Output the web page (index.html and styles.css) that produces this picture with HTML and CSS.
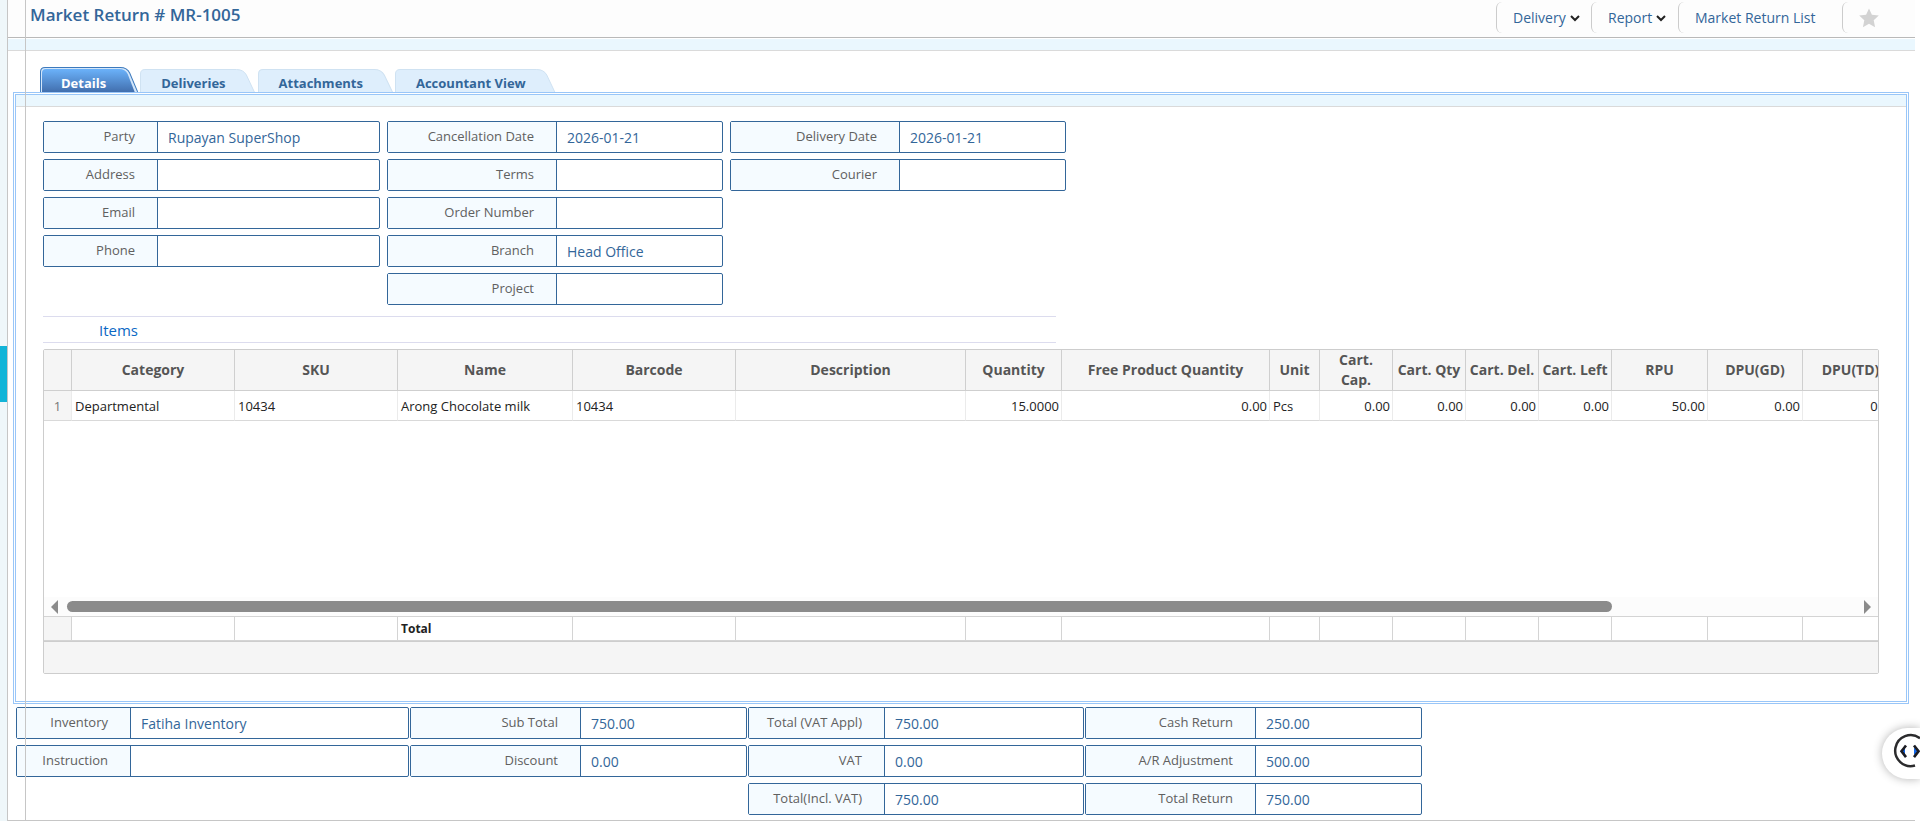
FILE: index.html
```html
<!DOCTYPE html>
<html lang="en">
<head>
<meta charset="utf-8">
<title>Market Return # MR-1005</title>
<link rel="stylesheet" href="styles.css">
</head>
<body>
<div class="app">
  <aside class="strip"><button class="strip-handle" aria-label="Open menu"></button></aside>
  <main class="main">
    <header class="header">
      <h1 class="title">Market Return # MR-1005</h1>
      <nav class="actions">
        <button class="action">Delivery
          <svg class="chevron" viewBox="0 0 10 8"><path d="M1 2l4 4 4-4"/></svg>
        </button>
        <button class="action">Report
          <svg class="chevron" viewBox="0 0 10 8"><path d="M1 2l4 4 4-4"/></svg>
        </button>
        <a class="action" href="#list">Market Return List</a>
        <button class="action" aria-label="Add to favourites">
          <svg class="star" viewBox="0 0 20 20"><path d="M10 0.500l2.900 6.300 6.900.8-5.100 4.700 1.400 6.900L10 15.800l-6.100 3.400 1.400-6.900L.2 7.600l6.900-.8z"/></svg>
        </button>
      </nav>
    </header>
    <div class="band"></div>

    <div class="tabs" role="tablist">
      <button class="tab tab-active" role="tab" aria-selected="true">
        <svg class="tab-shape" viewBox="0 0 98 25" preserveAspectRatio="none">
          <defs><linearGradient id="blue" x1="0" y1="0" x2="0" y2="1"><stop offset="0" stop-color="#6bb2fa"/><stop offset="1" stop-color="#426fae"/></linearGradient></defs>
          <path fill="#d3e6fa" stroke="#3d7abd" d="M.5 25V5Q.5.5 5 .5H80Q87 .5 89.500 6L97.500 25"/>
          <path fill="url(#blue)" d="M2 25V6Q2 2 6 2H79Q85 2 87.500 7L94.500 25z"/>
        </svg>
        <span class="tab-text">Details</span>
      </button>
      <button class="tab" role="tab">
        <svg class="tab-shape" viewBox="0 0 116 23" preserveAspectRatio="none"><path fill="#deeefc" stroke="#cfe2f2" d="M.5 24V5Q.5.5 5 .5H97Q104 .5 107 6L115.500 24"/></svg>
        <span class="tab-text">Deliveries</span>
      </button>
      <button class="tab" role="tab">
        <svg class="tab-shape" viewBox="0 0 133 23" preserveAspectRatio="none"><path fill="#deeefc" stroke="#cfe2f2" d="M.5 24V5Q.5.5 5 .5H114Q121 .5 124 6L132.500 24"/></svg>
        <span class="tab-text">Attachments</span>
      </button>
      <button class="tab" role="tab">
        <svg class="tab-shape" viewBox="0 0 161 23" preserveAspectRatio="none"><path fill="#deeefc" stroke="#cfe2f2" d="M.5 24V5Q.5.5 5 .5H142Q149 .5 152 6L160.500 24"/></svg>
        <span class="tab-text">Accountant View</span>
      </button>
    </div>

    <section class="panel">
      <div class="band band-inner"></div>
      <div class="panel-body">
        <div class="details">
          <div class="group group-party">
            <div class="field"><label for="party">Party</label><input id="party" readonly value="Rupayan SuperShop"></div>
            <div class="field"><label for="address">Address</label><input id="address" readonly></div>
            <div class="field"><label for="email">Email</label><input id="email" readonly></div>
            <div class="field"><label for="phone">Phone</label><input id="phone" readonly></div>
          </div>
          <div class="group group-order">
            <div class="field"><label for="cancel">Cancellation Date</label><input id="cancel" readonly value="2026-01-21"></div>
            <div class="field"><label for="terms">Terms</label><input id="terms" readonly></div>
            <div class="field"><label for="order">Order Number</label><input id="order" readonly></div>
            <div class="field"><label for="branch">Branch</label><input id="branch" readonly value="Head Office"></div>
            <div class="field"><label for="project">Project</label><input id="project" readonly></div>
          </div>
          <div class="group group-order">
            <div class="field"><label for="delivery">Delivery Date</label><input id="delivery" readonly value="2026-01-21"></div>
            <div class="field"><label for="courier">Courier</label><input id="courier" readonly></div>
          </div>
        </div>

        <h2 class="section-title">Items</h2>

        <div class="grid">
          <div class="grid-view">
            <table class="items">
              <colgroup><col class="c28"><col class="c163"><col class="c163"><col class="c175"><col class="c163"><col class="c230"><col class="c96"><col class="c208"><col class="c50"><col class="c73"><col class="c73"><col class="c73"><col class="c73"><col class="c96"><col class="c95"><col class="c96"></colgroup>
              <thead>
                <tr><th></th><th>Category</th><th>SKU</th><th>Name</th><th>Barcode</th><th>Description</th><th>Quantity</th><th>Free Product Quantity</th><th>Unit</th><th>Cart.<br>Cap.</th><th>Cart. Qty</th><th>Cart. Del.</th><th>Cart. Left</th><th>RPU</th><th>DPU(GD)</th><th>DPU(TD)</th></tr>
              </thead>
              <tbody>
                <tr><td class="index">1</td><td>Departmental</td><td>10434</td><td>Arong Chocolate milk</td><td>10434</td><td></td><td class="num">15.0000</td><td class="num">0.00</td><td>Pcs</td><td class="num">0.00</td><td class="num">0.00</td><td class="num">0.00</td><td class="num">0.00</td><td class="num">50.00</td><td class="num">0.00</td><td class="num">0.00</td></tr>
              </tbody>
            </table>
          </div>
          <div class="scrollbar">
            <svg class="arrow" viewBox="0 0 7 14"><path d="M7 0v14L0 7z"/></svg>
            <div class="track"><div class="thumb"></div></div>
            <svg class="arrow" viewBox="0 0 7 14"><path d="M0 0v14l7-7z"/></svg>
          </div>
          <div class="grid-total">
            <table class="items totals">
              <colgroup><col class="c28"><col class="c163"><col class="c163"><col class="c175"><col class="c163"><col class="c230"><col class="c96"><col class="c208"><col class="c50"><col class="c73"><col class="c73"><col class="c73"><col class="c73"><col class="c96"><col class="c95"><col class="c96"></colgroup>
              <tbody><tr><td class="index"></td><td></td><td></td><td>Total</td><td></td><td></td><td></td><td></td><td></td><td></td><td></td><td></td><td></td><td></td><td></td><td></td></tr></tbody>
            </table>
          </div>
          <div class="grid-foot"></div>
        </div>
      </div>
    </section>

    <footer class="summary">
      <div class="group group-inventory">
        <div class="field"><label for="inventory">Inventory</label><input id="inventory" readonly value="Fatiha Inventory"></div>
        <div class="field"><label for="instruction">Instruction</label><input id="instruction" readonly></div>
      </div>
      <div class="group group-amount">
        <div class="field"><label for="subtotal">Sub Total</label><input id="subtotal" readonly value="750.00"></div>
        <div class="field"><label for="discount">Discount</label><input id="discount" readonly value="0.00"></div>
      </div>
      <div class="group group-vat">
        <div class="field"><label for="appl">Total (VAT Appl)</label><input id="appl" readonly value="750.00"></div>
        <div class="field"><label for="vat">VAT</label><input id="vat" readonly value="0.00"></div>
        <div class="field"><label for="incl">Total(Incl. VAT)</label><input id="incl" readonly value="750.00"></div>
      </div>
      <div class="group group-amount">
        <div class="field"><label for="cash">Cash Return</label><input id="cash" readonly value="250.00"></div>
        <div class="field"><label for="ar">A/R Adjustment</label><input id="ar" readonly value="500.00"></div>
        <div class="field"><label for="total">Total Return</label><input id="total" readonly value="750.00"></div>
      </div>
    </footer>
  </main>
</div>

<button class="widget" aria-label="Code widget">
  <svg viewBox="0 0 38 51">
    <path fill="none" stroke="#2b2b2d" stroke-width="2.500" d="M38 10.200A15.500 15.500 0 1 0 33 37.500"/>
    <path fill="#1467e8" d="M23 19.500v7.500l-4-3.700zM32 19.500v7.500l4-3.700z"/>
    <path fill="none" stroke="#1c1c22" stroke-width="2.600" d="M24 17.500l-4.500 5.800 4.500 5.800M32 17.500l4.500 5.800-4.500 5.800"/>
  </svg>
</button>
</body>
</html>
```
FILE: styles.css
```css
* { box-sizing: border-box; }

body {
  margin: 0;
  background: #fff;
  color: #222;
  font-family: "Open Sans", "Noto Sans", sans-serif;
  font-size: 14px;
  overflow-x: hidden;
}

button, input { font: inherit; }
button { border: 0; padding: 0; background: none; cursor: pointer; }

.app { display: flex; min-height: 100vh; }

.strip {
  flex: 0 0 7px;
  display: flex;
  flex-direction: column;
  padding-top: 346px;
  background: #eff7fa;
}
.strip-handle { height: 56px; background: #12b4d8; }

.main {
  position: relative;
  flex: 1;
  min-width: 0;
  display: flex;
  flex-direction: column;
  margin-right: 5px;
  border-left: 1px solid #c6c6c6;
  border-bottom: 1px solid #c6c6c6;
}
.main::after {
  content: "";
  position: absolute;
  top: 0;
  bottom: 0;
  left: 17px;
  width: 1px;
  background: #c6c6c6;
  pointer-events: none;
}

.header {
  display: flex;
  justify-content: space-between;
  height: 38px;
  padding-left: 22px;
  background: #fdfdfd;
  border-bottom: 1px solid #b9b9b9;
}
.title {
  margin: 0;
  color: #336699;
  font-size: 17px;
  font-weight: 600;
  line-height: 30px;
}
.actions {
  display: grid;
  grid-template-columns: 95px 87px 164px 73px;
  padding: 2px 0 4px;
}
.action {
  display: flex;
  align-items: center;
  gap: 4px;
  padding-left: 16px;
  border-left: 1px solid #ccc;
  border-radius: 6px;
  color: #336699;
  text-decoration: none;
  white-space: nowrap;
}
.chevron { width: 10px; height: 8px; fill: none; stroke: #222; stroke-width: 2; }
.star { width: 20px; height: 20px; fill: #d3d3d3; }

.band {
  height: 13px;
  border-top: 1px solid #fff;
  border-bottom: 1px solid #dadada;
  background: #eaf7fe;
}
.band-inner { height: 12px; border-top: 0; }

.tabs {
  display: flex;
  align-items: flex-end;
  gap: 2px;
  padding: 16px 0 0 32px;
}
.tab {
  position: relative;
  height: 23px;
  padding: 0 30px 0 21px;
  color: #336699;
  font-size: 13px;
  font-weight: 700;
  line-height: 28px;
}
.tab-active { height: 25px; padding-right: 32px; color: #fff; line-height: 32px; }
.tab-shape { position: absolute; inset: 0; width: 100%; height: 100%; }
.tab-text { position: relative; display: block; height: 100%; }

.panel {
  flex: 1;
  display: flex;
  flex-direction: column;
  margin: 0 6px 0 5px;
  border: 3px double #99c6f8;
}
.panel-body {
  flex: 1;
  display: flex;
  flex-direction: column;
  padding: 14px 27px 27px;
}

.details { display: flex; gap: 7px; }
.group { display: flex; flex-direction: column; gap: 6px; }
.group-party { width: 337px; --label: 114px; }
.group-order { width: 336px; --label: 169px; }
.group-inventory { width: 393px; --label: 114px; }
.group-amount { width: 337px; --label: 170px; }
.group-vat { width: 336px; --label: 136px; }

.field {
  display: flex;
  height: 32px;
  border: 1px solid #336699;
  border-radius: 2px;
}
.field label {
  flex: 0 0 var(--label);
  padding-right: 22px;
  border-right: 1px solid #336699;
  background: #f5fbff;
  color: #606060;
  font-size: 13px;
  line-height: 28px;
  text-align: right;
  white-space: nowrap;
}
.field input {
  flex: 1;
  min-width: 0;
  padding: 0 10px;
  border: 0;
  outline: 0;
  background: transparent;
  color: #336699;
}

.section-title {
  width: 1013px;
  max-width: 100%;
  height: 27px;
  margin: 11px 0 6px;
  padding-left: 56px;
  border: solid #dcdcee;
  border-width: 1px 0;
  color: #0b68c4;
  font-size: 15px;
  font-weight: 400;
  line-height: 26px;
}

.grid {
  flex: 1;
  display: flex;
  flex-direction: column;
  border: 1px solid #cdcdcd;
  border-radius: 2px;
}
.grid-view { flex: 1; overflow: hidden; }
.grid-total { overflow: hidden; border-top: 1px solid #d4d4d4; }
.grid-foot { height: 32px; border-top: 1px solid #cdcdcd; background: #f5f5f5; }

.items {
  width: 1855px;
  table-layout: fixed;
  border-collapse: separate;
  border-spacing: 0;
}
.items th {
  height: 41px;
  padding: 0;
  border-right: 1px solid #cfcfcf;
  border-bottom: 1px solid #cfcfcf;
  background: #f5f5f5;
  color: #555;
  font-size: 14px;
  font-weight: 700;
  line-height: 20px;
}
.items td {
  height: 30px;
  padding: 0 3px;
  border-right: 1px solid #ebebeb;
  border-bottom: 1px solid #d9d9d9;
  color: #222;
  font-size: 13px;
  line-height: 20px;
}
.items .index { background: #f5f5f5; color: #777; text-align: center; }
.items .num { text-align: right; padding-right: 2px; }
.totals td { height: 24px; border-color: #d4d4d4; font-size: 12px; font-weight: 700; }

.c28 { width: 28px; }
.c50 { width: 50px; }
.c73 { width: 73px; }
.c95 { width: 95px; }
.c96 { width: 96px; }
.c163 { width: 163px; }
.c175 { width: 175px; }
.c208 { width: 208px; }
.c230 { width: 230px; }

.scrollbar {
  display: flex;
  align-items: center;
  gap: 9px;
  height: 19px;
  padding: 0 7px;
  background: #fcfcfc;
}
.arrow { flex: none; width: 7px; height: 14px; fill: #8b8b8b; }
.track { flex: 1; }
.thumb { width: 86.4%; height: 11px; border-radius: 6px; background: #8b8b8b; }

.summary {
  display: flex;
  align-items: flex-start;
  gap: 1px;
  padding: 3px 8px 5px;
}

.widget {
  position: fixed;
  right: 0;
  bottom: 42px;
  width: 38px;
  height: 51px;
  border-radius: 26px 0 0 26px;
  background: #fff;
  box-shadow: 0 0 10px rgba(0, 0, 0, 0.3);
}
.widget svg { display: block; width: 38px; height: 51px; }
```
